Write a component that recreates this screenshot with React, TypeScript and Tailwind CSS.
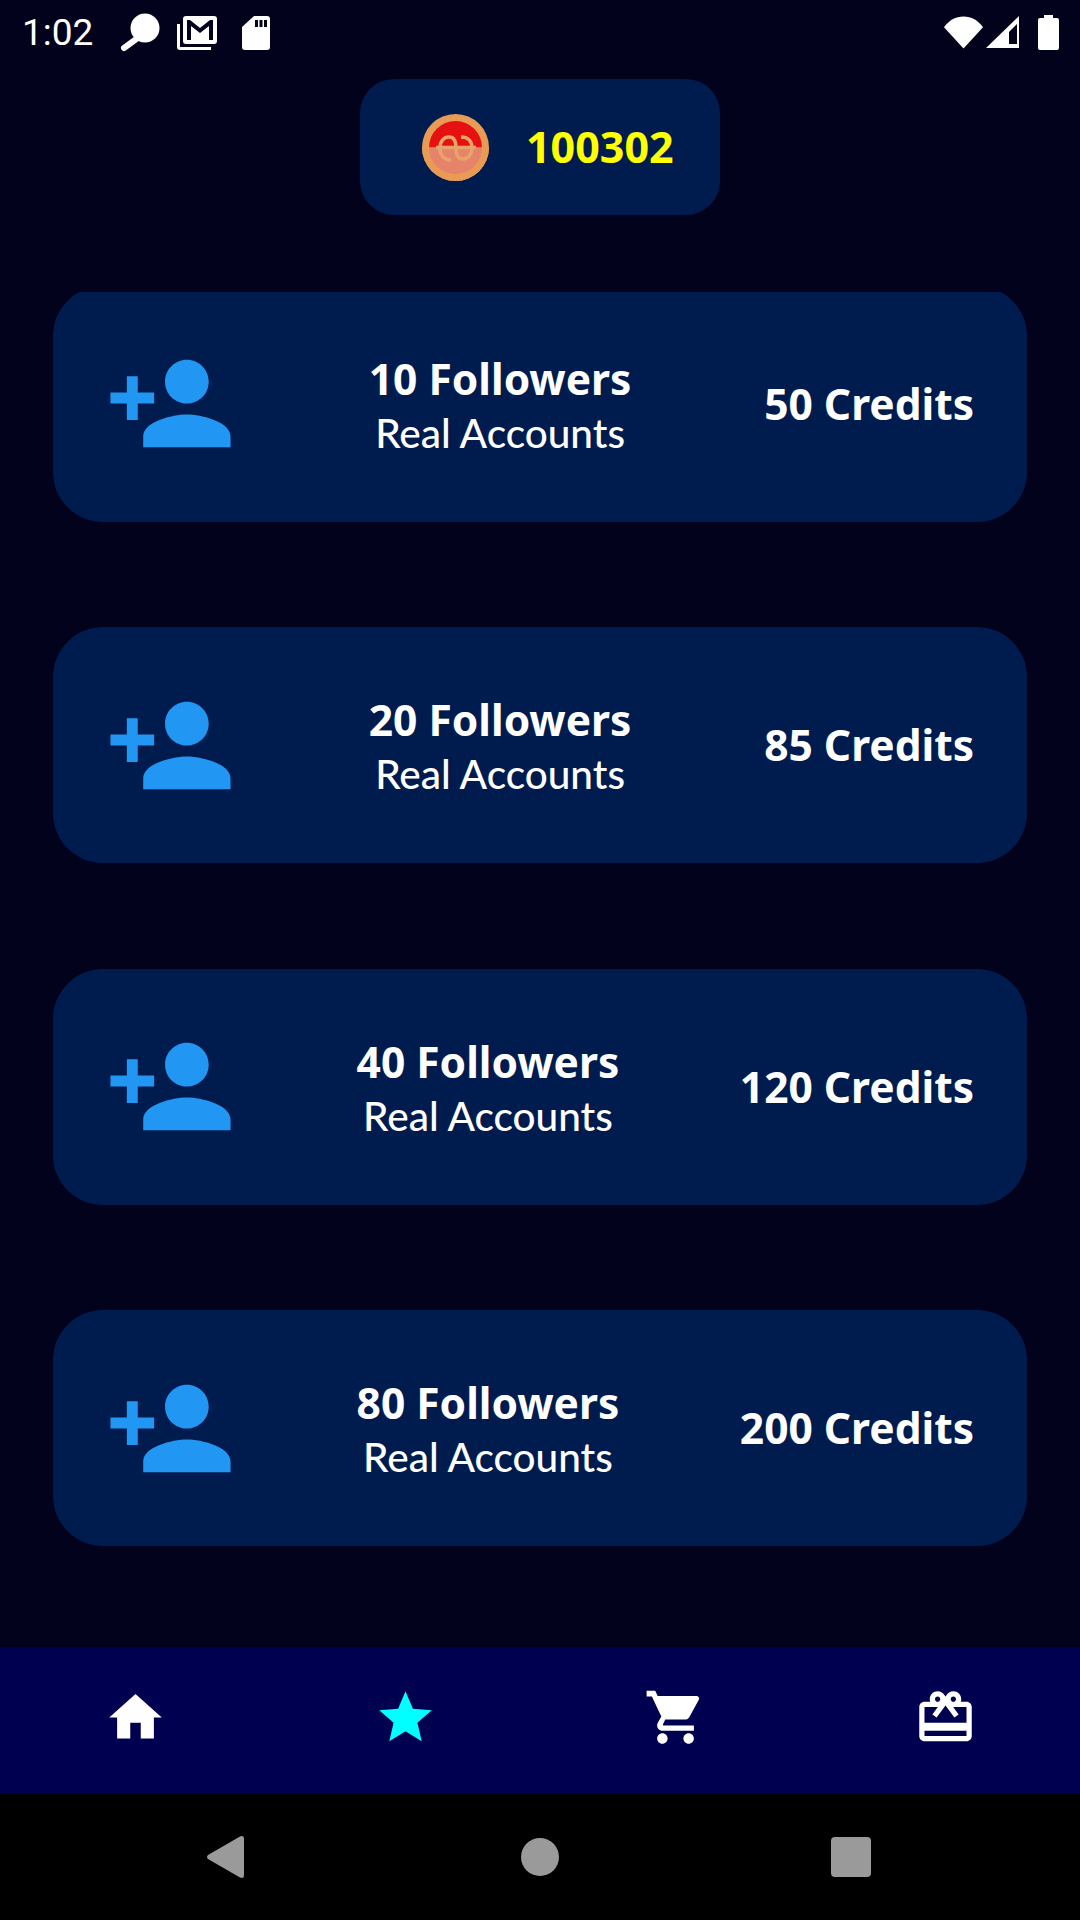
import type { ReactElement } from "react";

const packages = [
	{ followers: "10 Followers", credits: "50 Credits" },
	{ followers: "20 Followers", credits: "85 Credits" },
	{ followers: "40 Followers", credits: "120 Credits" },
	{ followers: "80 Followers", credits: "200 Credits" },
];

function StatusBar(): ReactElement {
	return (
		<div className="flex h-[66px] shrink-0 items-center pl-[22px] pr-[21px] pb-[1px] text-white">
			<span className="w-[70px] font-['Roboto'] text-[37px] leading-none">1:02</span>
			<svg className="ml-[28px] h-[40px] w-[40px]" viewBox="0 0 40 40" fill="white">
				<circle cx="25" cy="15" r="14.5" />
				<path d="M19 24 L4 35" stroke="white" strokeWidth="6" strokeLinecap="round" />
			</svg>
			<svg className="ml-[17px] h-[34px] w-[40px]" viewBox="0 0 40 34" fill="white">
				<path d="M0 8h3v23h31v3H3a3 3 0 0 1-3-3z" />
				<path fillRule="evenodd" d="M9 0h28a3 3 0 0 1 3 3v22a3 3 0 0 1-3 3H9a3 3 0 0 1-3-3V3a3 3 0 0 1 3-3zm1 4v20h4V10l9 7 9-7v14h4V4h-3l-10 8-10-8z" />
			</svg>
			<svg className="ml-[25px] h-[34px] w-[28px]" viewBox="0 0 28 34" fill="white">
				<path fillRule="evenodd" d="M12 0h13a3 3 0 0 1 3 3v28a3 3 0 0 1-3 3H3a3 3 0 0 1-3-3V11zm1 4v7h3V4zm4.500 0v7h3V4zm4.500 0v7h3V4z" />
			</svg>
			<div className="flex-1" />
			<svg className="h-[33px] w-[39px]" viewBox="0 0 40 33" fill="white">
				<path d="M0 11C5 4 12 0 20 0s15 4 20 11L20 33z" />
			</svg>
			<svg className="ml-[3px] h-[33px] w-[33px]" viewBox="0 0 33 33" fill="white">
				<path fillRule="evenodd" d="M33 0v32H0zM31 8l-8 8v12h8z" />
			</svg>
			<svg className="ml-[19px] h-[35px] w-[21px]" viewBox="0 0 21 35" fill="white">
				<path d="M6 0h9v3h4a2 2 0 0 1 2 2v28a2 2 0 0 1-2 2H2a2 2 0 0 1-2-2V5a2 2 0 0 1 2-2h4z" />
			</svg>
		</div>
	);
}

function Coin(): ReactElement {
	return (
		<svg className="h-[67px] w-[67px]" viewBox="0 0 67 67">
			<circle cx="33.500" cy="33.500" r="33.500" fill="#e89b55" />
			<circle cx="33.500" cy="33.500" r="26.500" fill="#e61212" />
			<path d="M0 33.500h67a33.500 33.500 0 0 1-67 0z" fill="#e89b55" />
			<path d="M7 33.500h53a26.500 26.500 0 0 1-53 0z" fill="#e6846b" />
			<g fill="none" stroke="#e8a468" strokeWidth="3.500">
				<path d="M14 33.500h40" />
				<path d="M29 46C21 46 18 40 18 34C18 27 22 23 27 23C33 23 34 29 34 34C34 40 36 45 41 45C46 45 50 40 50 34C50 27 46 23 39 23" />
			</g>
		</svg>
	);
}

function PackageCard({ followers, credits }: { followers: string; credits: string }): ReactElement {
	return (
		<div className="flex h-[236px] items-center rounded-[50px] bg-[#001c4f] pr-[53px] pl-[52px] text-white">
			<svg className="h-[131px] w-[131px] shrink-0" viewBox="0 0 24 24" fill="#2196f3">
				<path d="M15 12c2.210 0 4-1.790 4-4s-1.790-4-4-4-4 1.790-4 4 1.790 4 4 4zm-9-2V7H4v3H1v2h3v3h2v-3h3v-2H6zm9 4c-2.670 0-8 1.340-8 4v2h16v-2c0-2.660-5.330-4-8-4z" />
			</svg>
			<div className="flex flex-1 flex-col items-center pt-[4px]">
				<span className="font-['Noto_Sans'] text-[42.500px] leading-[54px] font-bold">{followers}</span>
				<span className="font-['Lato'] text-[40.500px] leading-[54px] font-medium">Real Accounts</span>
			</div>
			<span className="font-['Noto_Sans'] text-[42.500px] font-bold">{credits}</span>
		</div>
	);
}

function BottomNav(): ReactElement {
	return (
		<div className="grid h-[147px] shrink-0 grid-cols-4 bg-[#000050] pt-[39px]">
			<svg className="mx-auto h-[63px] w-[63px]" viewBox="0 0 24 24" fill="white">
				<path d="M10 20v-6h4v6h5v-8h3L12 3 2 12h3v8z" />
			</svg>
			<svg className="mx-auto h-[63px] w-[63px]" viewBox="0 0 24 24" fill="#00ffff">
				<path d="M12 17.270L18.180 21l-1.640-7.030L22 9.240l-7.190-.610L12 2 9.190 8.630 2 9.240l5.460 4.730L5.820 21z" />
			</svg>
			<svg className="mx-auto h-[63px] w-[63px]" viewBox="0 0 24 24" fill="white">
				<path d="M7 18c-1.100 0-1.990.9-1.990 2S5.900 22 7 22s2-.9 2-2-.9-2-2-2zM1 2v2h2l3.600 7.590-1.350 2.450c-.16.280-.25.610-.25.960 0 1.100.9 2 2 2h12v-2H7.420c-.14 0-.25-.11-.25-.25l.03-.12.9-1.830h7.450c.75 0 1.410-.41 1.750-1.030l3.580-6.490c.08-.14.12-.31.12-.48 0-.55-.45-1-1-1H5.210l-.94-2H1zm16 16c-1.100 0-1.990.9-1.990 2s.89 2 1.990 2 2-.9 2-2-.9-2-2-2z" />
			</svg>
			<svg className="mx-auto h-[63px] w-[63px]" viewBox="0 0 24 24" fill="white">
				<path d="M20 6h-2.180c.11-.31.18-.65.18-1 0-1.660-1.340-3-3-3-1.050 0-1.960.54-2.500 1.350l-.5.670-.5-.68C10.960 2.540 10.050 2 9 2 7.340 2 6 3.340 6 5c0 .35.07.69.18 1H4c-1.110 0-1.990.89-1.990 2L2 19c0 1.110.89 2 2 2h16c1.110 0 2-.89 2-2V8c0-1.110-.89-2-2-2zm-5-2c.55 0 1 .45 1 1s-.45 1-1 1-1-.45-1-1 .45-1 1-1zM9 4c.55 0 1 .45 1 1s-.45 1-1 1-1-.45-1-1 .45-1 1-1zm11 15H4v-2h16v2zm0-5H4V8h5.080L7 10.830 8.620 12 11 8.760l1-1.360 1 1.360L15.380 12 17 10.830 14.920 8H20v6z" />
			</svg>
		</div>
	);
}

function SystemNav(): ReactElement {
	return (
		<div className="flex h-[126px] shrink-0 items-center bg-black pl-[207px] pb-[1px]">
			<svg className="h-[42px] w-[37px]" viewBox="0 0 37 42" fill="#9a9a9a">
				<path d="M1 19 L33 .5 Q37 -1 37 3 V39 Q37 43 33 41.500 L1 23 Q-1 21 1 19z" />
			</svg>
			<div className="ml-[277px] h-[38px] w-[38px] rounded-full bg-[#9a9a9a]" />
			<div className="ml-[272px] h-[40px] w-[40px] rounded-[4px] bg-[#9a9a9a]" />
		</div>
	);
}

export default function App(): ReactElement {
	return (
		<div className="flex h-[1920px] w-[1080px] flex-col overflow-hidden bg-[#02021c]">
			<StatusBar />
			<div className="mt-[13px] flex h-[136px] w-[360px] shrink-0 items-center self-center rounded-[34px] bg-[#001c4f] pl-[62px]">
				<Coin />
				<span className="ml-[37px] font-['Noto_Sans'] text-[43px] font-bold text-[#ffff00]">100302</span>
			</div>
			<div className="mt-[77px] flex min-h-0 flex-1 flex-col overflow-hidden px-[53px]">
				<div className="-mt-[6.500px] flex flex-col gap-[105.500px]">
					{packages.map((p) => (
						<PackageCard key={p.followers} followers={p.followers} credits={p.credits} />
					))}
				</div>
			</div>
			<BottomNav />
			<SystemNav />
		</div>
	);
}
